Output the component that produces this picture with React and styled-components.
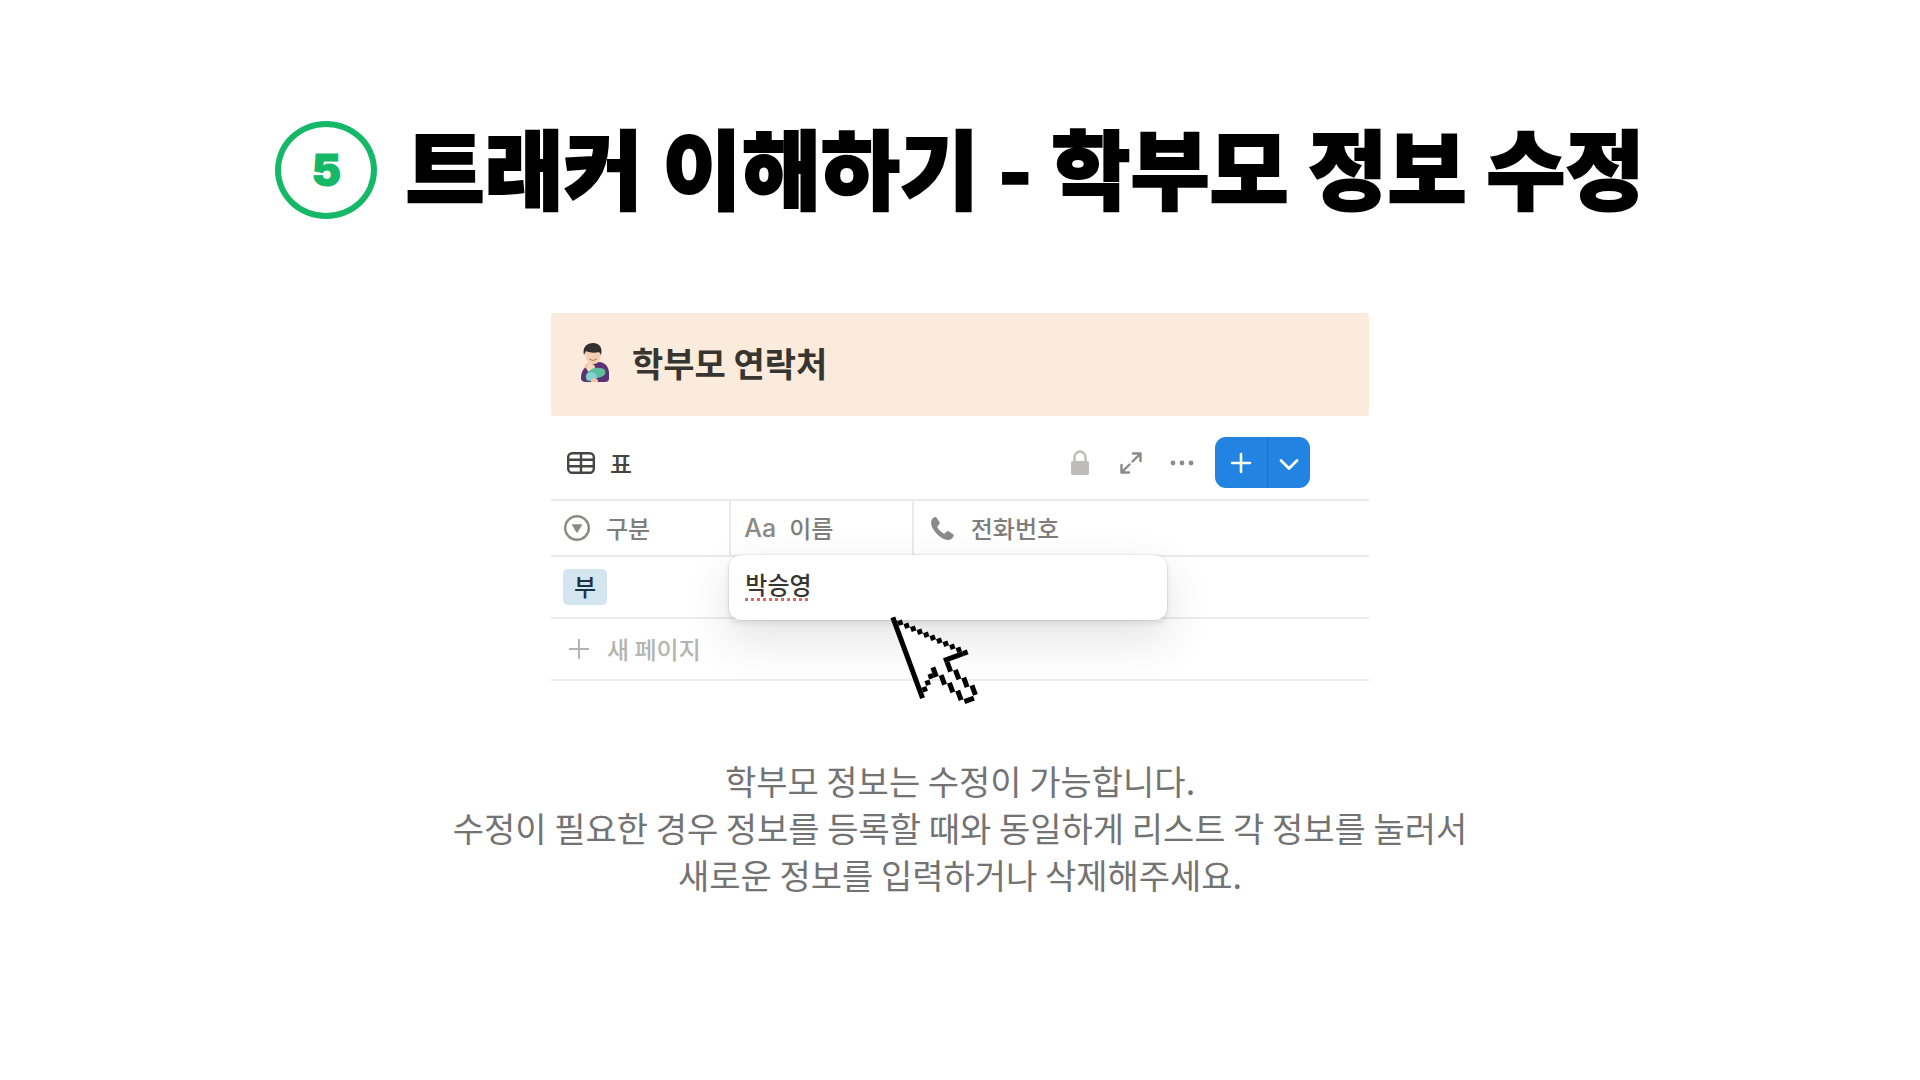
import React, { useState } from "react";
import styled, { createGlobalStyle } from "styled-components";

export default () => {
  const [name, setName] = useState("박승영");
  return (
    <Page>
      <GlobalStyle />
      <Heading>
        <Step>5</Step>
        <Title>트래커 이해하기 - 학부모 정보 수정</Title>
      </Heading>

      <Database>
        <Banner>
          <ParentIcon />
          <BannerTitle>학부모 연락처</BannerTitle>
        </Banner>

        <Toolbar>
          <ViewTab type="button">
            <TableIcon />표
          </ViewTab>
          <Actions>
            <IconButton type="button" aria-label="잠금">
              <LockIcon />
            </IconButton>
            <IconButton type="button" aria-label="확대">
              <ExpandIcon />
            </IconButton>
            <IconButton type="button" aria-label="더 보기">
              <DotsIcon />
            </IconButton>
            <SplitButton>
              <SplitPart type="button" width="52px" aria-label="추가">
                <svg width="22" height="22" viewBox="0 0 22 22" stroke="#fff" strokeWidth="2.6" strokeLinecap="round">
                  <path d="M11 2v18M2 11h18" />
                </svg>
              </SplitPart>
              <SplitPart type="button" width="43px" divided aria-label="추가 옵션">
                <svg width="22" height="22" viewBox="0 0 22 22" fill="none" stroke="#fff" strokeWidth="2.8" strokeLinecap="round" strokeLinejoin="round">
                  <path d="M3 8.500l8 8 8-8" />
                </svg>
              </SplitPart>
            </SplitButton>
          </Actions>
        </Toolbar>

        <Table>
          <colgroup>
            <col width="21.8%" />
            <col width="22.3%" />
            <col />
          </colgroup>
          <thead>
            <tr>
              <Th>
                <Label gap="16px">
                  <SelectIcon />
                  구분
                </Label>
              </Th>
              <Th>
                <Label gap="13px">
                  <TypeMark>Aa</TypeMark>
                  이름
                </Label>
              </Th>
              <Th>
                <Label gap="16px" inset="16px">
                  <PhoneIcon />
                  전화번호
                </Label>
              </Th>
            </tr>
          </thead>
          <tbody>
            <tr>
              <Td>
                <Tag>부</Tag>
              </Td>
              <Td colSpan={2}>
                <NameInput
                  aria-label="이름"
                  spellCheck={false}
                  value={name}
                  onChange={(e) => setName(e.target.value)}
                />
              </Td>
            </tr>
            <tr>
              <Td colSpan={3}>
                <NewPage type="button">
                  <svg width="20" height="20" viewBox="0 0 20 20" stroke="#b5b4b1" strokeWidth="2">
                    <path d="M10 0v20M0 10h20" />
                  </svg>
                  새 페이지
                </NewPage>
              </Td>
            </tr>
          </tbody>
        </Table>
        <Pointer />
      </Database>

      <Description>
        학부모 정보는 수정이 가능합니다.
        <br />
        수정이 필요한 경우 정보를 등록할 때와 동일하게 리스트 각 정보를 눌러서
        <br />
        새로운 정보를 입력하거나 삭제해주세요.
      </Description>
    </Page>
  );
};

const TableIcon = () => (
  <svg width="28" height="22" viewBox="0 0 28 22" fill="none" stroke="#454440" strokeWidth="2.4">
    <rect x="1.2" y="1.2" width="25.6" height="19.6" rx="4" />
    <path d="M1 7.8h26M1 14.2h26M14 1v20" />
  </svg>
);

const LockIcon = () => (
  <svg width="20" height="26" viewBox="0 0 20 26">
    <path d="M4.5 12V7.5a5.5 6 0 0 1 11 0V12" fill="none" stroke="#bebcb8" strokeWidth="2.4" />
    <rect x="1" y="11" width="18" height="14" rx="2" fill="#bebcb8" />
  </svg>
);

const ExpandIcon = () => (
  <svg width="22" height="22" viewBox="0 0 22 22" fill="none" stroke="#8b8a86" strokeWidth="2.4" strokeLinecap="round" strokeLinejoin="round">
    <path d="M13 1.5h7.5V9M20 2l-7.5 7.5M1.5 13v7.5H9M2 20l7.5-7.5" />
  </svg>
);

const DotsIcon = () => (
  <svg width="24" height="6" viewBox="0 0 24 6" fill="#8b8a86">
    <circle cx="3" cy="3" r="2.4" />
    <circle cx="12" cy="3" r="2.4" />
    <circle cx="21" cy="3" r="2.4" />
  </svg>
);

const SelectIcon = () => (
  <svg width="26" height="26" viewBox="0 0 26 26">
    <circle cx="13" cy="13" r="11.8" fill="none" stroke="#8b8a86" strokeWidth="2.4" />
    <path d="M8.6 9.2h8.8q1 .1.5 1l-4.2 7q-.7.8-1.4 0l-4.2-7q-.5-.9.5-1z" fill="#8b8a86" />
  </svg>
);

const PhoneIcon = () => (
  <svg width="25" height="25" viewBox="0 0 25 25" fill="#8b8a86">
    <path d="M1.2 5.2C1.6 3.3 3.4 1.4 5 1.1c.8-.1 1.4.2 1.8.9l2.7 4.2c.5.9.4 1.6-.3 2.3L7.7 10c-.5.5-.5 1 0 1.7 1.5 2.3 3.3 4.1 5.6 5.6.7.5 1.2.4 1.7-.1l1.5-1.5c.7-.7 1.5-.8 2.3-.3l4.1 2.7c.8.5 1 1.2.8 2-.6 1.900-2.5 3.600-4.800 3.800-4.100.2-8.700-2.600-12.200-6.200C3.200 14 .5 9.400 1.200 5.200z" />
  </svg>
);

const ParentIcon = () => (
  <svg width="30" height="40" viewBox="0 0 30 40" aria-hidden="true">
    <path d="M1 35c0-8 5-13 11-14l7-2c6 0 10 5 10 11v6c0 2-2 3-4 3H7c-4 0-6-1-6-4z" fill="#5b3273" />
    <path d="M5 10c0-5 3-8 8-8s8 3 8 8c0 6-3 11-7 11S5 17 5 10z" fill="#f4cfb0" />
    <path d="M4 12C2 4 7 0 13 0s10 4 8 12l-2-3c-4 1-9 1-13-1z" fill="#34302f" />
    <path d="M9 16q4 3 8 0" fill="none" stroke="#b87963" strokeWidth="1" />
    <path d="M4 23l5-4 5 5-5 5z" fill="#f0c4a5" />
    <circle cx="11" cy="25" r="4" fill="#f7d8c0" />
    <path d="M8 29c5-5 10-5 16-3 3 3 1 7-3 8l-13 4c-3-2-3-6 0-9z" fill="#5cbe9d" />
    <path d="M7 31c4-3 9-2 10 2 0 3-3 5-6 5-4 0-6-4-4-7z" fill="#87cfd0" />
    <path d="M11 36q4-2 7 1v2h-7z" fill="#f0c4a5" />
  </svg>
);

// x, y, width, height of each run of pixels in the arrow's outline
const outline = [
  [0, 0, 1, 17],
  ...Array.from({ length: 11 }, (_, i) => [i + 1, i + 1, 1, 1]),
  [7, 11, 4, 1],
  [7, 12, 1, 2],
  [8, 14, 1, 2],
  [9, 16, 1, 2],
  [10, 18, 1, 2],
  [8, 20, 2, 1],
  [7, 18, 1, 2],
  [6, 16, 1, 2],
  [5, 14, 1, 2],
  [4, 12, 1, 2],
  [3, 13, 1, 1],
  [2, 14, 1, 1],
  [1, 15, 1, 1],
];

const Pointer = () => (
  <PointerSvg width="100" height="100" viewBox="0 0 100 100" aria-hidden="true">
    <g transform="translate(8.7 8.7) rotate(-20.2) scale(5.07) translate(-.5 -.5)">
      <path d="M.5.5L11.5 11.5H7.5V13.5L10.5 18.5V20H8L4.5 13L.5 16.5z" fill="#fff" />
      {outline.map(([x, y, w, h]) => (
        <rect key={`${x}-${y}`} x={x} y={y} width={w} height={h} />
      ))}
    </g>
  </PointerSvg>
);

const GlobalStyle = createGlobalStyle`
  * {
    box-sizing: border-box;
  }

  body {
    margin: 0;
    background: #fff;
    font-family: "Noto Sans CJK KR", sans-serif;
  }

  button, input {
    font: inherit;
    color: inherit;
    border: 0;
    padding: 0;
    background: none;
  }
`;

const Page = styled.main`
  display: flex;
  flex-direction: column;
  align-items: center;
  min-height: 100vh;
  padding: 121px 24px;
`;

const Heading = styled.header`
  display: flex;
  align-items: center;
  gap: 28px;
  height: 98px;
`;

const Step = styled.span`
  display: flex;
  align-items: center;
  justify-content: center;
  flex: none;
  width: 102px;
  height: 98px;
  border: 6px solid #14b866;
  border-radius: 50%;
  color: #14b866;
  font-family: Inter, sans-serif;
  font-size: 44px;
  font-weight: 900;
  -webkit-text-stroke: 1px #14b866;
`;

const Title = styled.h1`
  margin: 0;
  padding-bottom: 8px;
  color: #000;
  font-size: 86px;
  font-weight: 900;
  line-height: 90px;
  -webkit-text-stroke: 2px #000;
`;

const Database = styled.section`
  position: relative;
  width: 100%;
  max-width: 818px;
  margin-top: 94px;
`;

const Banner = styled.div`
  display: flex;
  align-items: center;
  gap: 22px;
  height: 103px;
  padding: 0 30px 4px 29px;
  border-radius: 3px;
  background: #faebdd;
`;

const BannerTitle = styled.h2`
  margin: 0;
  color: #37352f;
  font-size: 34px;
  font-weight: 700;
  line-height: 40px;
`;

const Toolbar = styled.div`
  display: flex;
  align-items: center;
  justify-content: space-between;
  height: 83px;
  padding: 10px 59px 0 16px;
`;

const ViewTab = styled.button`
  display: flex;
  align-items: center;
  gap: 15px;
  color: #454440;
  font-size: 24px;
  font-weight: 500;
  line-height: 32px;
`;

const Actions = styled.div`
  display: flex;
  align-items: center;
`;

const IconButton = styled.button`
  display: flex;
  align-items: center;
  justify-content: center;
  width: 51px;
  height: 51px;
`;

const SplitButton = styled.div`
  display: flex;
  height: 51px;
  margin-left: 8px;
  overflow: hidden;
  border-radius: 11px;
  background: #2383e2;
`;

const SplitPart = styled.button.withConfig({
  shouldForwardProp: (prop) => !["width", "divided"].includes(prop),
})`
  display: flex;
  align-items: center;
  justify-content: center;
  width: ${({ width }) => width};
  border-left: ${({ divided }) => (divided ? "1px solid #1c70c6" : "0")};
`;

const Table = styled.table`
  width: 100%;
  table-layout: fixed;
  border-collapse: separate;
  border-spacing: 0;
  border-top: 2px solid #ebebea;
`;

const Th = styled.th`
  height: 56px;
  padding: 0;
  border-bottom: 2px solid #ebebea;
  color: #7f7e7a;
  font-size: 24px;
  font-weight: 500;
  text-align: left;

  & + & {
    border-left: 2px solid #ebebea;
  }
`;

const Label = styled.span.withConfig({
  shouldForwardProp: (prop) => !["gap", "inset"].includes(prop),
})`
  display: flex;
  align-items: center;
  gap: ${({ gap }) => gap};
  padding-left: ${({ inset }) => inset ?? "13px"};
  line-height: 32px;
`;

const TypeMark = styled.span`
  color: #8b8a86;
  font-family: Inter, sans-serif;
  font-size: 25px;
  font-weight: 500;
`;

const Td = styled.td`
  position: relative;
  height: 62px;
  padding: 0;
  border-bottom: 2px solid #ebebea;
`;

const Tag = styled.span`
  display: block;
  width: 44px;
  height: 36px;
  margin-left: 12px;
  border-radius: 5px;
  background: #d3e5ef;
  color: #183347;
  font-size: 24px;
  font-weight: 500;
  line-height: 34px;
  text-align: center;
`;

/* the open cell editor floats over the neighbouring cells */
const NameInput = styled.input`
  position: absolute;
  top: -2px;
  left: 0;
  width: 438px;
  height: 65px;
  padding: 0 16px 8px;
  border-radius: 12px;
  outline: 0;
  background: #fff;
  box-shadow: 0 0 0 1px rgba(15, 15, 15, 0.06), 0 3px 6px rgba(15, 15, 15, 0.1),
    0 18px 48px rgba(15, 15, 15, 0.12);
  color: #37352f;
  font-size: 24px;
  font-weight: 500;
  text-decoration: underline dotted #e2655f 3px;
  text-underline-offset: 4px;
`;

const NewPage = styled.button`
  display: flex;
  align-items: center;
  gap: 18px;
  padding-left: 18px;
  color: #b5b4b1;
  font-size: 24px;
  font-weight: 500;
  line-height: 32px;
`;

const PointerSvg = styled.svg`
  position: absolute;
  top: 298px;
  left: 334px;
  pointer-events: none;
`;

const Description = styled.p`
  margin: 76px 0 0;
  color: #737373;
  font-size: 34px;
  line-height: 47px;
  text-align: center;
`;
